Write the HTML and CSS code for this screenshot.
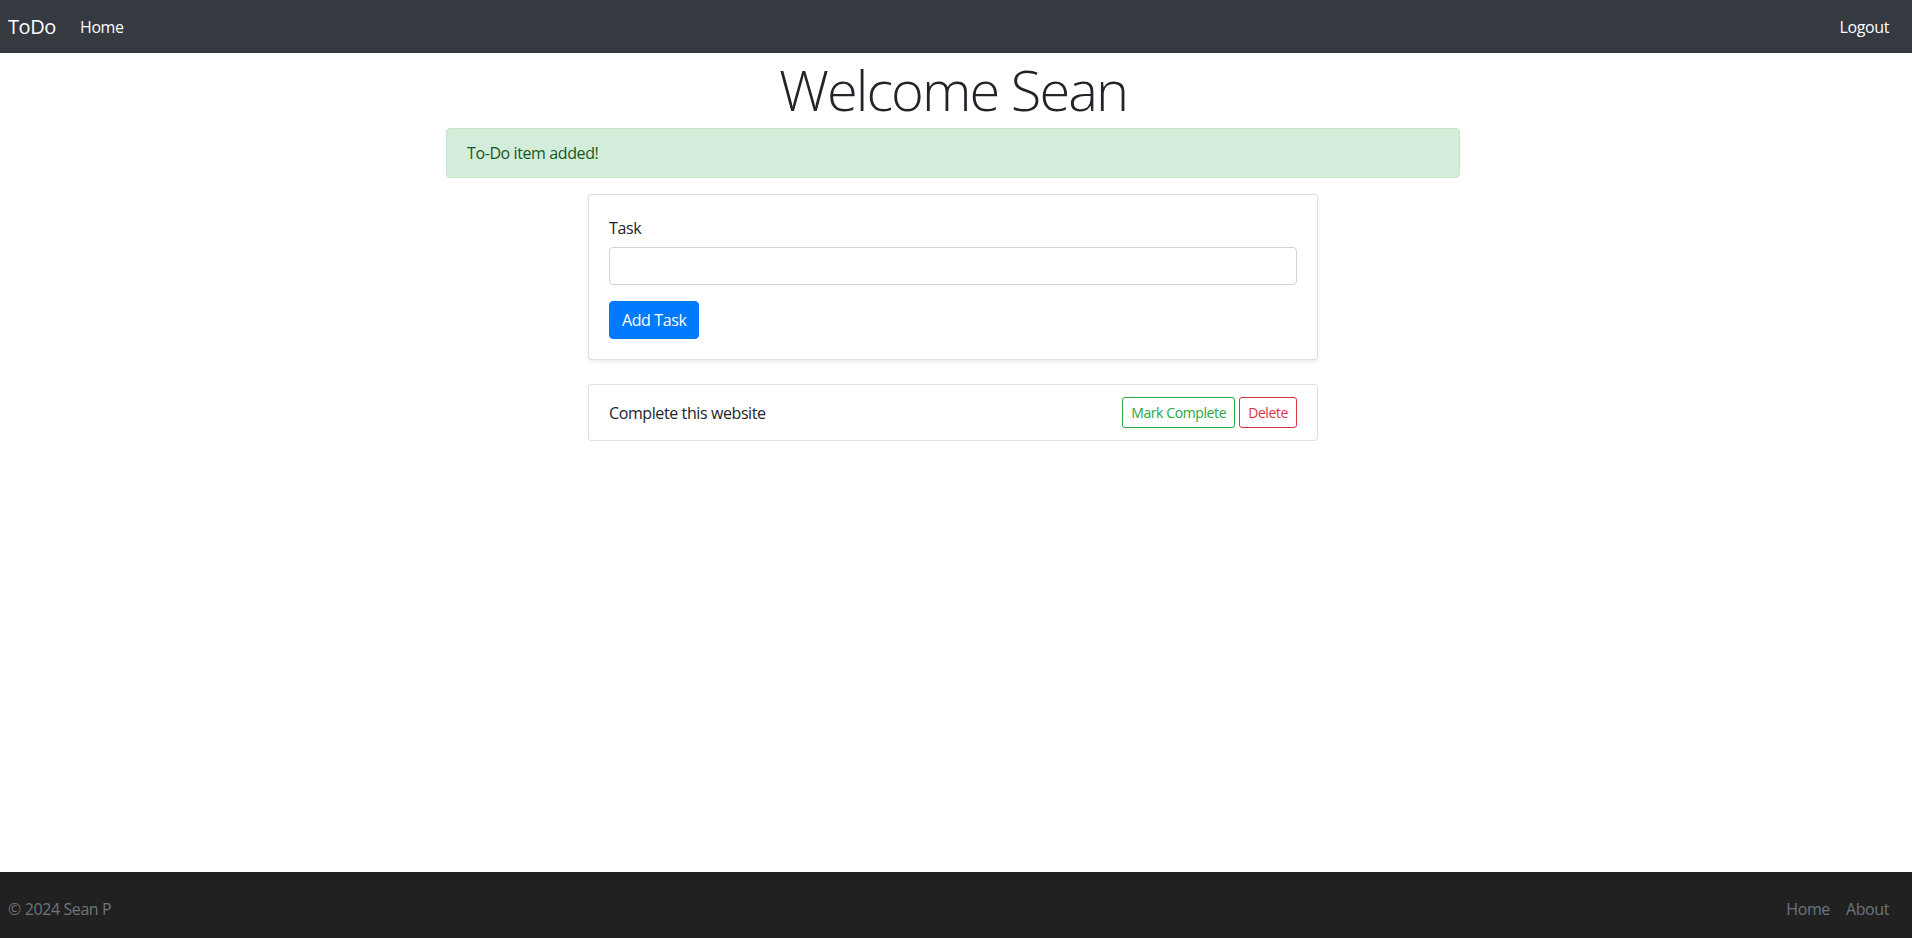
FILE: index.html
```html
<!DOCTYPE html>
<html lang="en">
<head>
<meta charset="utf-8">
<title>ToDo</title>
<link rel="stylesheet" href="styles.css">
</head>
<body>
<nav class="navbar">
  <a class="brand" href="#">ToDo</a>
  <a class="nav-link" href="#">Home</a>
  <div class="spacer"></div>
  <a class="nav-link" href="#">Logout</a>
</nav>
<main class="main">
  <div class="container">
    <h1 class="display">Welcome Sean</h1>
    <div class="alert">To-Do item added!</div>
    <div class="card card-form">
      <div class="card-body">
        <div class="form-group">
          <label class="label" for="task">Task</label>
          <input class="input" id="task" type="text">
        </div>
        <button class="btn btn-primary" type="button">Add Task</button>
      </div>
    </div>
    <div class="card card-item">
      <div class="item-body">
        <span class="item-text">Complete this website</span>
        <div class="item-actions">
          <button class="btn-sm btn-success-o" type="button">Mark Complete</button>
          <button class="btn-sm btn-danger-o" type="button">Delete</button>
        </div>
      </div>
    </div>
  </div>
</main>
<footer class="footer">
  <span class="copy">© 2024 Sean P</span>
  <div class="footer-links">
    <a class="footer-link" href="#">Home</a>
    <a class="footer-link" href="#">About</a>
  </div>
</footer>
</body>
</html>
```
FILE: styles.css
```css
* { box-sizing: border-box; }
html, body { height: 100%; }
body {
  margin: 0;
  font-family: "Open Sans", "Noto Sans", "Liberation Sans", sans-serif;
  font-size: 16px;
  line-height: 1.5;
  letter-spacing: -0.025em;
  color: #212529;
  background: #fff;
  display: flex;
  flex-direction: column;
  min-height: 100vh;
}
a { text-decoration: none; }

.navbar {
  height: 53px;
  background: #343a40;
  display: flex;
  align-items: center;
  padding: 0 15px 0 8px;
}
.brand {
  color: #fff;
  font-size: 20px;
  line-height: 30px;
  margin-right: 16px;
}
.nav-link {
  color: #fff;
  padding: 0 8px;
  font-size: 16px;
}
.spacer { flex: 1; }

.main {
  flex: 1;
  padding-right: 6px;
}
.container {
  width: 1014px;
  margin: 0 auto;
}
.display {
  margin: 0 0 5px;
  padding-top: 3px;
  font-size: 56px;
  font-weight: 300;
  line-height: 1.2;
  letter-spacing: -0.035em;
  text-align: center;
}
.alert {
  background: #d4edda;
  border: 1px solid #c3e6cb;
  color: #155724;
  border-radius: 4px;
  padding: 12px 20px;
  margin-bottom: 16px;
}
.card {
  width: 730px;
  margin: 0 auto;
  border: 1px solid rgba(0,0,0,.125);
  border-radius: 4px;
  background: #fff;
}
.card-form {
  box-shadow: 0 2px 4px rgba(0,0,0,.075);
}
.card-body { padding: 20px; }
.form-group { margin-bottom: 16px; }
.label {
  display: block;
  margin-bottom: 8px;
  padding-top: 1px;
  height: 24px;
}
.input {
  display: block;
  width: 100%;
  height: 38px;
  border: 1px solid #ced4da;
  border-radius: 4px;
  padding: 6px 12px;
  font: inherit;
}
.btn {
  font: inherit;
  letter-spacing: inherit;
  border: 1px solid transparent;
  border-radius: 4px;
  padding: 6px 12px;
  line-height: 24px;
}
.btn-primary {
  background: #007bff;
  border-color: #007bff;
  color: #fff;
}
.card-item { margin-top: 24px; }
.item-body {
  display: flex;
  align-items: center;
  padding: 12px 20px;
}
.item-text { flex: 1; }
.item-actions {
  display: flex;
  gap: 4px;
}
.btn-sm {
  font-family: inherit;
  letter-spacing: inherit;
  font-size: 14px;
  line-height: 21px;
  padding: 4px 8px;
  border-radius: 3px;
  background: #fff;
  border: 1px solid;
}
.btn-success-o { color: #28a745; border-color: #28a745; }
.btn-danger-o { color: #dc3545; border-color: #dc3545; }

.footer {
  height: 66px;
  background: #212121;
  display: flex;
  align-items: center;
  justify-content: space-between;
  padding: 8px 23px 0 8px;
  color: #6c757d;
}
.footer-links {
  display: flex;
  gap: 16px;
}
.footer-link { color: #6c757d; }
```
